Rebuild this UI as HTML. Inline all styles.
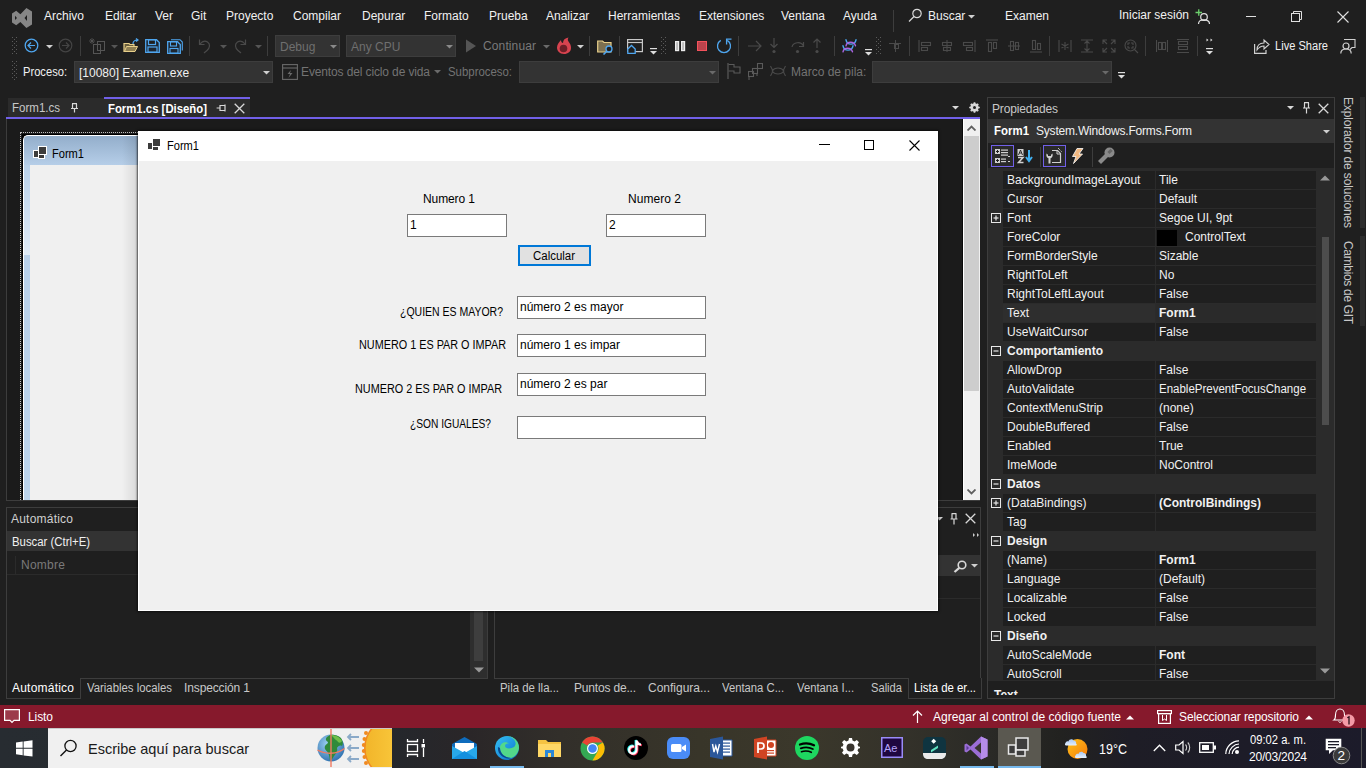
<!DOCTYPE html><html><head><meta charset="utf-8"><style>
*{margin:0;padding:0;box-sizing:border-box}
html,body{width:1366px;height:768px;overflow:hidden;background:#1f1f1f;font-family:"Liberation Sans",sans-serif}
.a{position:absolute}
.t{position:absolute;white-space:nowrap;line-height:normal}
</style></head><body>
<div class="t" style="left:44px;top:9px;font-size:12px;color:#f1f1f1;">Archivo</div>
<div class="t" style="left:105px;top:9px;font-size:12px;color:#f1f1f1;">Editar</div>
<div class="t" style="left:155px;top:9px;font-size:12px;color:#f1f1f1;">Ver</div>
<div class="t" style="left:191px;top:9px;font-size:12px;color:#f1f1f1;">Git</div>
<div class="t" style="left:226px;top:9px;font-size:12px;color:#f1f1f1;">Proyecto</div>
<div class="t" style="left:293px;top:9px;font-size:12px;color:#f1f1f1;">Compilar</div>
<div class="t" style="left:362px;top:9px;font-size:12px;color:#f1f1f1;">Depurar</div>
<div class="t" style="left:424px;top:9px;font-size:12px;color:#f1f1f1;">Formato</div>
<div class="t" style="left:489px;top:9px;font-size:12px;color:#f1f1f1;">Prueba</div>
<div class="t" style="left:546px;top:9px;font-size:12px;color:#f1f1f1;">Analizar</div>
<div class="t" style="left:608px;top:9px;font-size:12px;color:#f1f1f1;">Herramientas</div>
<div class="t" style="left:699px;top:9px;font-size:12px;color:#f1f1f1;">Extensiones</div>
<div class="t" style="left:781px;top:9px;font-size:12px;color:#f1f1f1;">Ventana</div>
<div class="t" style="left:843px;top:9px;font-size:12px;color:#f1f1f1;">Ayuda</div>
<div class="a" style="left:893px;top:10px;width:1px;height:22px;background:#3d3d3d;"></div>
<svg class="a" style="left:10px;top:6px;" width="24" height="24" viewBox="0 0 24 24"><path d="M2 7.5L6.2 4.8L10.4 8.2L16.4 2L22 5.5V18.5L16.4 22.1L10.4 16L6.2 19.2L2 16.5ZM5 9.8L7 12L5 14ZM17 9L14.5 12L17 15Z" fill="#868686" fill-rule="evenodd"/></svg>
<svg class="a" style="left:907px;top:7px;" width="15" height="16" viewBox="0 0 15 16"><circle cx="10" cy="6.5" r="4.2" fill="#2a2a2a" stroke="#d8d8d8" stroke-width="1.2"/><path d="M7 9.5L2 14.5" stroke="#d8d8d8" stroke-width="1.3"/></svg>
<svg class="a" style="left:968px;top:15px;" width="7" height="4" viewBox="0 0 7 4"><path d="M0 0H7L3.5 3.5Z" fill="#d0d0d0"/></svg>
<svg class="a" style="left:1194px;top:8px;" width="16" height="16" viewBox="0 0 16 16"><path d="M1.5 4.5H8M4.75 1.2V7.8" stroke="#6ccf6c" stroke-width="1.3"/><circle cx="10" cy="9" r="3.3" fill="none" stroke="#e0e0e0" stroke-width="1.2"/><path d="M4.5 16C4.5 12.5 7 11.8 10 11.8C13 11.8 15.5 12.5 15.5 16" fill="none" stroke="#e0e0e0" stroke-width="1.2"/></svg>
<div class="a" style="left:1246px;top:16px;width:10px;height:1px;background:#e0e0e0;"></div>
<svg class="a" style="left:1291px;top:11px;" width="12" height="12" viewBox="0 0 12 12"><rect x="0.5" y="2.5" width="8" height="8" fill="none" stroke="#e0e0e0"/><path d="M2.5 2.5V0.5H10.5V8.5H8.5" fill="none" stroke="#e0e0e0"/></svg>
<svg class="a" style="left:1337px;top:11px;" width="12" height="12" viewBox="0 0 12 12"><path d="M0.5 0.5L11.5 11.5M11.5 0.5L0.5 11.5" stroke="#e0e0e0" stroke-width="1.1"/></svg>
<div class="t" style="left:928px;top:9px;font-size:12px;color:#f1f1f1;">Buscar</div>
<div class="t" style="left:1005px;top:9px;font-size:12px;color:#f1f1f1;">Examen</div>
<div class="t" style="left:1119px;top:8px;font-size:12px;color:#f1f1f1;">Iniciar sesión</div>
<svg class="a" style="left:12px;top:37px;" width="5" height="18" viewBox="0 0 5 18"><g fill="#5a5a5a"><rect x="0" y="0" width="1" height="1"/><rect x="4" y="0" width="1" height="1"/><rect x="2" y="2" width="1" height="1"/><rect x="0" y="4" width="1" height="1"/><rect x="4" y="4" width="1" height="1"/><rect x="2" y="6" width="1" height="1"/><rect x="0" y="8" width="1" height="1"/><rect x="4" y="8" width="1" height="1"/><rect x="2" y="10" width="1" height="1"/><rect x="0" y="12" width="1" height="1"/><rect x="4" y="12" width="1" height="1"/><rect x="2" y="14" width="1" height="1"/><rect x="0" y="16" width="1" height="1"/><rect x="4" y="16" width="1" height="1"/></g></svg>
<svg class="a" style="left:24px;top:38px;" width="15" height="15" viewBox="0 0 15 15"><circle cx="7.5" cy="7.5" r="6.3" fill="none" stroke="#4fa6ef" stroke-width="1.3"/><path d="M11 7.5H4.2M7 4.5L4 7.5L7 10.5" fill="none" stroke="#4fa6ef" stroke-width="1.2"/></svg>
<svg class="a" style="left:46px;top:45px;" width="7" height="4" viewBox="0 0 7 4"><path d="M0 0H7L3.5 3.5Z" fill="#d0d0d0"/></svg>
<svg class="a" style="left:58px;top:38px;" width="15" height="15" viewBox="0 0 15 15"><circle cx="7.5" cy="7.5" r="6.3" fill="none" stroke="#444" stroke-width="1.2"/><path d="M4 7.5H10.8M8 4.5L11 7.5L8 10.5" fill="none" stroke="#444" stroke-width="1.2"/></svg>
<div class="a" style="left:80px;top:36px;width:1px;height:20px;background:#3d3d3d;"></div>
<svg class="a" style="left:89px;top:38px;" width="17" height="17" viewBox="0 0 17 17"><g fill="none" stroke="#555" stroke-width="1"><rect x="4.5" y="6.5" width="7" height="9"/><rect x="8.5" y="3.5" width="7" height="9"/></g><path d="M3 0V6M0 3H6M1 1L5 5M5 1L1 5" stroke="#555" stroke-width=".8"/></svg>
<svg class="a" style="left:111px;top:45px;" width="7" height="4" viewBox="0 0 7 4"><path d="M0 0H7L3.5 3.5Z" fill="#555"/></svg>
<svg class="a" style="left:123px;top:38px;" width="16" height="16" viewBox="0 0 16 16"><path d="M1 5.5H6L7 6.5H11V13.5H1Z" fill="#6b5f3d" stroke="#e8cf8a" stroke-width="1.2"/><path d="M1.5 13.5L3.5 8.5H14.5L12 13.5Z" fill="#8f7f52" stroke="#e8cf8a" stroke-width="1"/><path d="M10 6C10 3 12 2 14.5 2M13 0.5L15 2L13 3.5" fill="none" stroke="#4fa6ef" stroke-width="1.2"/></svg>
<svg class="a" style="left:145px;top:39px;" width="16" height="15" viewBox="0 0 16 15"><path d="M0.7 0.7H11.5L14.3 3.5V13.3H0.7Z" fill="#1e2630" stroke="#4fa6ef" stroke-width="1.3"/><rect x="3.5" y="1" width="7" height="4.5" fill="#1f1f1f" stroke="#4fa6ef" stroke-width="1.2"/><rect x="3" y="8" width="9" height="5" fill="#1e2630" stroke="#4fa6ef" stroke-width="1.2"/></svg>
<svg class="a" style="left:167px;top:39px;" width="16" height="15" viewBox="0 0 16 15"><path d="M4 0.7H13L15.3 3V11.5" fill="none" stroke="#4fa6ef" stroke-width="1.1"/><path d="M0.7 2.7H10.5L13.3 5.5V14.3H0.7Z" fill="#1e2630" stroke="#4fa6ef" stroke-width="1.3"/><rect x="3.5" y="3" width="6" height="4" fill="#1f1f1f" stroke="#4fa6ef" stroke-width="1.1"/><rect x="3" y="9.5" width="8" height="4.5" fill="#1e2630" stroke="#4fa6ef" stroke-width="1.1"/></svg>
<div class="a" style="left:189px;top:36px;width:1px;height:20px;background:#3d3d3d;"></div>
<svg class="a" style="left:198px;top:38px;" width="14" height="16" viewBox="0 0 14 16"><path d="M1.5 1.5V6.5H6.5M2 6C4 3.5 7 2.5 9.5 4C12.5 6 12 10 9 12.5L6 15" fill="none" stroke="#4a4a4a" stroke-width="1.2"/></svg>
<svg class="a" style="left:220px;top:45px;" width="7" height="4" viewBox="0 0 7 4"><path d="M0 0H7L3.5 3.5Z" fill="#555"/></svg>
<svg class="a" style="left:233px;top:38px;" width="14" height="16" viewBox="0 0 14 16"><path d="M12.5 1.5V6.5H7.5M12 6C10 3.5 7 2.5 4.5 4C1.5 6 2 10 5 12.5L8 15" fill="none" stroke="#4a4a4a" stroke-width="1.2"/></svg>
<svg class="a" style="left:255px;top:45px;" width="7" height="4" viewBox="0 0 7 4"><path d="M0 0H7L3.5 3.5Z" fill="#555"/></svg>
<div class="a" style="left:267px;top:36px;width:1px;height:20px;background:#3d3d3d;"></div>
<div class="a" style="left:275px;top:35px;width:65px;height:22px;background:#333333;border:1px solid #3d3d3d;"></div>
<div class="t" style="left:280px;top:40px;font-size:12px;color:#6f6f6f;">Debug</div>
<svg class="a" style="left:330px;top:45px;" width="7" height="4" viewBox="0 0 7 4"><path d="M0 0H7L3.5 3.5Z" fill="#8a8a8a"/></svg>
<div class="a" style="left:346px;top:35px;width:110px;height:22px;background:#333333;border:1px solid #3d3d3d;"></div>
<div class="t" style="left:351px;top:40px;font-size:12px;color:#6f6f6f;">Any CPU</div>
<svg class="a" style="left:446px;top:45px;" width="7" height="4" viewBox="0 0 7 4"><path d="M0 0H7L3.5 3.5Z" fill="#8a8a8a"/></svg>
<svg class="a" style="left:465px;top:39px;" width="12" height="14" viewBox="0 0 12 14"><path d="M1 0.5L11 7L1 13.5Z" fill="#555"/></svg>
<div class="t" style="left:483px;top:39px;font-size:12px;color:#7a7a7a;letter-spacing:0.121px;">Continuar</div>
<svg class="a" style="left:543px;top:45px;" width="7" height="4" viewBox="0 0 7 4"><path d="M0 0H7L3.5 3.5Z" fill="#6a6a6a"/></svg>
<svg class="a" style="left:556px;top:37px;" width="16" height="18" viewBox="0 0 16 18"><path d="M8 17C3.5 17 1 14 1 10.5C1 7 3.5 5 5 3C5 5 6 6 7 6C7 3 9 1 12.5 0.5C11 2.5 12 4 13.5 6C15 8 15 10 15 11C15 14.5 12 17 8 17Z" fill="#d8434f"/><circle cx="7.5" cy="11.5" r="3.8" fill="#6e1f27"/></svg>
<svg class="a" style="left:577px;top:45px;" width="7" height="4" viewBox="0 0 7 4"><path d="M0 0H7L3.5 3.5Z" fill="#d0d0d0"/></svg>
<div class="a" style="left:589px;top:36px;width:1px;height:20px;background:#3d3d3d;"></div>
<svg class="a" style="left:597px;top:40px;" width="17" height="15" viewBox="0 0 17 15"><path d="M0.7 1H5.5L7 2.5H14V12H0.7Z" fill="#7d7050" stroke="#e8cf8a" stroke-width="1.2"/><circle cx="12" cy="9" r="3" fill="#1f1f1f" stroke="#4fa6ef" stroke-width="1.3"/><path d="M9.8 11.2L6.5 14.5" stroke="#4fa6ef" stroke-width="1.6"/></svg>
<div class="a" style="left:619px;top:36px;width:1px;height:20px;background:#3d3d3d;"></div>
<svg class="a" style="left:627px;top:39px;" width="16" height="15" viewBox="0 0 16 15"><rect x="0.6" y="0.6" width="14.8" height="12" fill="#1f1f1f" stroke="#c8c8c8" stroke-width="1.2"/><path d="M1 3.5H15" stroke="#c8c8c8" stroke-width="1.2"/><path d="M0.8 10L4.5 6.5L8.2 10V14.3H0.8Z" fill="#1f1f1f" stroke="#4fa6ef" stroke-width="1.3"/></svg>
<svg class="a" style="left:650px;top:48px;" width="7" height="8" viewBox="0 0 7 8"><rect x="0" y="0" width="7" height="1.2" fill="#ddd"/><path d="M0 3H7L3.5 6.5Z" fill="#ddd"/></svg>
<svg class="a" style="left:661px;top:37px;" width="5" height="18" viewBox="0 0 5 18"><g fill="#5a5a5a"><rect x="0" y="0" width="1" height="1"/><rect x="4" y="0" width="1" height="1"/><rect x="2" y="2" width="1" height="1"/><rect x="0" y="4" width="1" height="1"/><rect x="4" y="4" width="1" height="1"/><rect x="2" y="6" width="1" height="1"/><rect x="0" y="8" width="1" height="1"/><rect x="4" y="8" width="1" height="1"/><rect x="2" y="10" width="1" height="1"/><rect x="0" y="12" width="1" height="1"/><rect x="4" y="12" width="1" height="1"/><rect x="2" y="14" width="1" height="1"/><rect x="0" y="16" width="1" height="1"/><rect x="4" y="16" width="1" height="1"/></g></svg>
<svg class="a" style="left:674px;top:40px;" width="12" height="12" viewBox="0 0 12 12"><rect x="1.6" y="1.6" width="3" height="9" fill="#b8b8b8" stroke="#ececec" stroke-width="1.2"/><rect x="7.6" y="1.6" width="3" height="9" fill="#b8b8b8" stroke="#ececec" stroke-width="1.2"/></svg>
<div class="a" style="left:697px;top:41px;width:10px;height:10px;background:#bb434c;border:1px solid #f4525c;"></div>
<svg class="a" style="left:716px;top:38px;" width="16" height="16" viewBox="0 0 16 16"><path d="M4.75 2.4A6.5 6.5 0 1 0 11.25 2.4" fill="none" stroke="#4fa6ef" stroke-width="1.3"/><path d="M10.6 6.5V1.2H15.5" fill="none" stroke="#4fa6ef" stroke-width="1.3"/></svg>
<div class="a" style="left:738px;top:36px;width:1px;height:20px;background:#3d3d3d;"></div>
<svg class="a" style="left:747px;top:39px;" width="16" height="14" viewBox="0 0 16 14"><path d="M1 7H14M9 2L14 7L9 12" fill="none" stroke="#4a4a4a" stroke-width="1.2"/></svg>
<svg class="a" style="left:769px;top:38px;" width="10" height="16" viewBox="0 0 10 16"><path d="M5 0V9M1.5 6L5 9.5L8.5 6" fill="none" stroke="#4a4a4a" stroke-width="1.2"/><circle cx="5" cy="13.5" r="1.6" fill="#4a4a4a"/></svg>
<svg class="a" style="left:790px;top:38px;" width="16" height="16" viewBox="0 0 16 16"><path d="M2 9C3 4 11 3 13.5 8M13.5 4V8.5H9" fill="none" stroke="#4a4a4a" stroke-width="1.2"/><circle cx="7.5" cy="13.5" r="1.6" fill="#4a4a4a"/></svg>
<svg class="a" style="left:812px;top:38px;" width="10" height="16" viewBox="0 0 10 16"><path d="M5 10V1M1.5 4.5L5 1L8.5 4.5" fill="none" stroke="#4a4a4a" stroke-width="1.2"/><circle cx="5" cy="13.5" r="1.6" fill="#4a4a4a"/></svg>
<div class="a" style="left:834px;top:36px;width:1px;height:20px;background:#3d3d3d;"></div>
<svg class="a" style="left:842px;top:38px;" width="16" height="16" viewBox="0 0 16 16"><g fill="none" stroke-width="1.4" stroke-linecap="round"><path d="M4 1.8C5 7.5 13 7.5 14 1.8" stroke="#4aa8f0"/><path d="M4 7.8C5 3 12 3 13.5 7.8" stroke="#a864e0"/><path d="M1 7.8C2 13.5 10 13.5 11 7.8" stroke="#4aa8f0"/><path d="M1 13.8C2 9 9 9 10.5 13.8" stroke="#a864e0"/></g></svg>
<svg class="a" style="left:865px;top:49px;" width="7" height="8" viewBox="0 0 7 8"><rect x="0" y="0" width="7" height="1.2" fill="#ddd"/><path d="M0 3H7L3.5 6.5Z" fill="#ddd"/></svg>
<svg class="a" style="left:876px;top:37px;" width="5" height="18" viewBox="0 0 5 18"><g fill="#5a5a5a"><rect x="0" y="0" width="1" height="1"/><rect x="4" y="0" width="1" height="1"/><rect x="2" y="2" width="1" height="1"/><rect x="0" y="4" width="1" height="1"/><rect x="4" y="4" width="1" height="1"/><rect x="2" y="6" width="1" height="1"/><rect x="0" y="8" width="1" height="1"/><rect x="4" y="8" width="1" height="1"/><rect x="2" y="10" width="1" height="1"/><rect x="0" y="12" width="1" height="1"/><rect x="4" y="12" width="1" height="1"/><rect x="2" y="14" width="1" height="1"/><rect x="0" y="16" width="1" height="1"/><rect x="4" y="16" width="1" height="1"/></g></svg>
<svg class="a" style="left:888px;top:39px;" width="14" height="14" viewBox="0 0 14 14"><g fill="none" stroke="#4a4a4a" stroke-width="1"><path d="M7.5 1V13M1 4.5H13"/><rect x="6.5" y="5.5" width="4" height="4"/></g></svg>
<div class="a" style="left:909px;top:36px;width:1px;height:20px;background:#3d3d3d;"></div>
<svg class="a" style="left:918px;top:39px;" width="14" height="14" viewBox="0 0 14 14"><g fill="none" stroke="#4a4a4a" stroke-width="1.1"><path d="M1 1V13"/><rect x="3.5" y="3.5" width="9" height="3"/><rect x="3.5" y="8.5" width="6" height="3"/></g></svg>
<svg class="a" style="left:940px;top:39px;" width="14" height="14" viewBox="0 0 14 14"><g fill="none" stroke="#4a4a4a" stroke-width="1.1"><path d="M7 1V13"/><rect x="2.5" y="3.5" width="9" height="3"/><rect x="3.5" y="8.5" width="7" height="3"/></g></svg>
<svg class="a" style="left:962px;top:39px;" width="14" height="14" viewBox="0 0 14 14"><g fill="none" stroke="#4a4a4a" stroke-width="1.1"><path d="M13 1V13"/><rect x="1.5" y="3.5" width="9" height="3"/><rect x="4.5" y="8.5" width="6" height="3"/></g></svg>
<svg class="a" style="left:985px;top:39px;" width="14" height="14" viewBox="0 0 14 14"><g fill="none" stroke="#4a4a4a" stroke-width="1.1"><path d="M1 1H13"/><rect x="3.5" y="3.5" width="3" height="9"/><rect x="8.5" y="3.5" width="3" height="6"/></g></svg>
<svg class="a" style="left:1007px;top:39px;" width="14" height="14" viewBox="0 0 14 14"><g fill="none" stroke="#4a4a4a" stroke-width="1.1"><path d="M1 7H13"/><rect x="3.5" y="2.5" width="3" height="9"/><rect x="8.5" y="3.5" width="3" height="7"/></g></svg>
<svg class="a" style="left:1029px;top:39px;" width="14" height="14" viewBox="0 0 14 14"><g fill="none" stroke="#4a4a4a" stroke-width="1.1"><path d="M1 13H13"/><rect x="3.5" y="1.5" width="3" height="9"/><rect x="8.5" y="4.5" width="3" height="6"/></g></svg>
<div class="a" style="left:1049px;top:36px;width:1px;height:20px;background:#3d3d3d;"></div>
<svg class="a" style="left:1058px;top:39px;" width="14" height="14" viewBox="0 0 14 14"><g fill="none" stroke="#4a4a4a" stroke-width="1.1"><path d="M1 1V13M13 1V13M7 3V11M3.5 5L10.5 9M10.5 5L3.5 9"/></g></svg>
<svg class="a" style="left:1080px;top:39px;" width="14" height="14" viewBox="0 0 14 14"><g fill="none" stroke="#4a4a4a" stroke-width="1.1"><path d="M1 1H13M1 13H13M7 2V12M4.5 4.5L7 2L9.5 4.5M4.5 9.5L7 12L9.5 9.5"/></g></svg>
<svg class="a" style="left:1102px;top:39px;" width="14" height="14" viewBox="0 0 14 14"><g fill="none" stroke="#4a4a4a" stroke-width="1.1"><path d="M1 5V1H5M9 1H13V5M13 9V13H9M5 13H1V9M1 1L5 5M13 1L9 5M13 13L9 9M1 13L5 9"/></g></svg>
<svg class="a" style="left:1124px;top:39px;" width="15" height="15" viewBox="0 0 15 15"><g fill="none" stroke="#4a4a4a" stroke-width="1.1"><circle cx="6.5" cy="6.5" r="5.5"/><path d="M10.5 10.5L14 14M4 6V4H6M7 4H9V6M9 7V9H7M6 9H4V7"/></g></svg>
<div class="a" style="left:1145px;top:36px;width:1px;height:20px;background:#3d3d3d;"></div>
<svg class="a" style="left:1156px;top:39px;" width="12" height="14" viewBox="0 0 12 14"><g fill="none" stroke="#4a4a4a" stroke-width="1.1"><path d="M0.5 1V13M11.5 1V13"/><rect x="2.5" y="3.5" width="3" height="7"/><rect x="6.5" y="3.5" width="3" height="7"/></g></svg>
<svg class="a" style="left:1176px;top:39px;" width="14" height="14" viewBox="0 0 14 14"><g fill="none" stroke="#4a4a4a" stroke-width="1.1"><path d="M1 0.5H13M1 13.5H13"/><rect x="2.5" y="2.5" width="9" height="3"/><rect x="2.5" y="7.5" width="9" height="3"/></g></svg>
<div class="a" style="left:1197px;top:36px;width:1px;height:20px;background:#3d3d3d;"></div>
<svg class="a" style="left:1206px;top:38px;" width="8" height="18" viewBox="0 0 8 18"><path d="M0.5 0.5L2.5 2L0.5 3.5ZM4.5 0.5L6.5 2L4.5 3.5Z" fill="#ddd"/><rect x="0" y="10" width="7" height="1.2" fill="#ddd"/><path d="M0 13H7L3.5 16.5Z" fill="#ddd"/></svg>
<svg class="a" style="left:1254px;top:38px;" width="16" height="16" viewBox="0 0 16 16"><path d="M0.6 6V15.4H12V12" fill="none" stroke="#d0d0d0" stroke-width="1.2"/><path d="M3 12C3 7 6 5 10 5V2L15 6.5L10 11V8C7 8 5 9 3 12Z" fill="none" stroke="#d0d0d0" stroke-width="1.1"/></svg>
<div class="t" style="left:1275px;top:39px;font-size:12px;color:#f1f1f1;transform-origin:0 0;transform:scaleX(0.9240);">Live Share</div>
<svg class="a" style="left:1340px;top:38px;" width="16" height="16" viewBox="0 0 16 16"><path d="M4 1.5H15V9.5H12L10 11.5" fill="none" stroke="#d0d0d0" stroke-width="1.1"/><circle cx="6" cy="8" r="3" fill="none" stroke="#d0d0d0" stroke-width="1.2"/><path d="M0.8 15.5C0.8 12 3 11 6 11C9 11 11.2 12 11.2 15.5" fill="none" stroke="#d0d0d0" stroke-width="1.2"/></svg>
<svg class="a" style="left:12px;top:61px;" width="5" height="20" viewBox="0 0 5 20"><g fill="#5a5a5a"><rect x="0" y="0" width="1" height="1"/><rect x="4" y="0" width="1" height="1"/><rect x="2" y="2" width="1" height="1"/><rect x="0" y="4" width="1" height="1"/><rect x="4" y="4" width="1" height="1"/><rect x="2" y="6" width="1" height="1"/><rect x="0" y="8" width="1" height="1"/><rect x="4" y="8" width="1" height="1"/><rect x="2" y="10" width="1" height="1"/><rect x="0" y="12" width="1" height="1"/><rect x="4" y="12" width="1" height="1"/><rect x="2" y="14" width="1" height="1"/><rect x="0" y="16" width="1" height="1"/><rect x="4" y="16" width="1" height="1"/><rect x="2" y="18" width="1" height="1"/></g></svg>
<div class="t" style="left:23px;top:65px;font-size:12px;color:#f1f1f1;transform-origin:0 0;transform:scaleX(0.9294);">Proceso:</div>
<div class="a" style="left:74px;top:61px;width:199px;height:22px;background:#333333;border:1px solid #3d3d3d;"></div>
<div class="t" style="left:79px;top:66px;font-size:12px;color:#f1f1f1;">[10080] Examen.exe</div>
<svg class="a" style="left:263px;top:71px;" width="7" height="4" viewBox="0 0 7 4"><path d="M0 0H7L3.5 3.5Z" fill="#d0d0d0"/></svg>
<svg class="a" style="left:282px;top:64px;" width="16" height="16" viewBox="0 0 16 16"><rect x="0.6" y="0.6" width="14.8" height="14.8" fill="none" stroke="#6a6a6a" stroke-width="1.1"/><path d="M1 4H15" stroke="#6a6a6a" stroke-width="1.1"/><path d="M9 6L5.5 10H8L6.5 14L10.5 9H8Z" fill="#6a6a6a"/></svg>
<div class="t" style="left:301px;top:65px;font-size:12px;color:#737373;letter-spacing:-0.127px;">Eventos del ciclo de vida</div>
<svg class="a" style="left:434px;top:70px;" width="7" height="4" viewBox="0 0 7 4"><path d="M0 0H7L3.5 3.5Z" fill="#6a6a6a"/></svg>
<div class="t" style="left:448px;top:65px;font-size:12px;color:#737373;transform-origin:0 0;transform:scaleX(0.9501);">Subproceso:</div>
<div class="a" style="left:519px;top:61px;width:200px;height:22px;background:#333333;border:1px solid #3d3d3d;"></div>
<svg class="a" style="left:709px;top:71px;" width="7" height="4" viewBox="0 0 7 4"><path d="M0 0H7L3.5 3.5Z" fill="#6a6a6a"/></svg>
<svg class="a" style="left:727px;top:63px;" width="14" height="16" viewBox="0 0 14 16"><path d="M1 0V16" stroke="#5a5a5a" stroke-width="1.2"/><path d="M1.5 1.5H7V4H13V10H7V8H1.5" fill="none" stroke="#5a5a5a" stroke-width="1.1"/></svg>
<svg class="a" style="left:748px;top:63px;" width="15" height="17" viewBox="0 0 15 17"><g fill="none" stroke="#5a5a5a" stroke-width="1.1"><rect x="0.5" y="8.5" width="5" height="5"/><rect x="4.5" y="5.5" width="5" height="5"/><rect x="9.5" y="0.5" width="5" height="5"/><path d="M1 14V17M9 10.5V13"/></g></svg>
<svg class="a" style="left:770px;top:65px;" width="16" height="12" viewBox="0 0 16 12"><g fill="none" stroke="#4a4a4a" stroke-width="1.1"><path d="M0.5 1L3 6L0.5 11M15.5 1L13 6L15.5 11M2 6C5 2 11 2 14 6C11 10 5 10 2 6"/></g></svg>
<div class="t" style="left:791px;top:65px;font-size:12px;color:#737373;">Marco de pila:</div>
<div class="a" style="left:872px;top:61px;width:240px;height:22px;background:#333333;border:1px solid #3d3d3d;"></div>
<svg class="a" style="left:1102px;top:71px;" width="7" height="4" viewBox="0 0 7 4"><path d="M0 0H7L3.5 3.5Z" fill="#6a6a6a"/></svg>
<svg class="a" style="left:1118px;top:72px;" width="7" height="8" viewBox="0 0 7 8"><rect x="0" y="0" width="7" height="1.2" fill="#ddd"/><path d="M0 3H7L3.5 6.5Z" fill="#ddd"/></svg>
<div class="a" style="left:8px;top:98px;width:96px;height:19px;background:#2b2b2b;"></div>
<div class="t" style="left:12px;top:101px;font-size:12px;color:#c8c8c8;transform-origin:0 0;transform:scaleX(0.9600);">Form1.cs</div>
<svg class="a" style="left:70px;top:103px;" width="9" height="10" viewBox="0 0 9 10"><path d="M2 0.6H7M2.5 1V5.5H6.5V1M1 5.5H8M4.5 6V9.5" fill="none" stroke="#d8d8d8" stroke-width="1.2"/></svg>
<div class="a" style="left:104px;top:97px;width:146px;height:20px;background:#2b2b2b;"></div>
<div class="a" style="left:104px;top:97px;width:146px;height:2px;background:#7160e8;"></div>
<div class="t" style="left:108px;top:102px;font-size:12px;color:#ffffff;font-weight:bold;transform-origin:0 0;transform:scaleX(0.9458);">Form1.cs [Diseño]</div>
<svg class="a" style="left:216px;top:103px;" width="11" height="10" viewBox="0 0 11 10"><path d="M0.6 5H4M4 2V8M4.5 2.5H9V7.5H4.5M9 1.5V8.5" fill="none" stroke="#d8d8d8" stroke-width="1.2"/></svg>
<svg class="a" style="left:234px;top:103px;" width="11" height="11" viewBox="0 0 11 11"><path d="M0.7 0.7L10.3 10.3M10.3 0.7L0.7 10.3" stroke="#d8d8d8" stroke-width="1.3"/></svg>
<svg class="a" style="left:952px;top:106px;" width="7" height="4" viewBox="0 0 7 4"><path d="M0 0H7L3.5 3.5Z" fill="#d8d8d8"/></svg>
<svg class="a" style="left:969px;top:102px;" width="11" height="11" viewBox="0 0 11 11"><circle cx="5.5" cy="5.5" r="3.2" fill="none" stroke="#d8d8d8" stroke-width="2"/><path d="M5.5 0.2V10.8M0.2 5.5H10.8M1.8 1.8L9.2 9.2M9.2 1.8L1.8 9.2" stroke="#d8d8d8" stroke-width="1.7"/><circle cx="5.5" cy="5.5" r="1.5" fill="#1f1f1f"/></svg>
<div class="a" style="left:6px;top:117px;width:974px;height:2px;background:#7160e8;"></div>
<div class="a" style="left:6px;top:119px;width:974px;height:382px;background:#1b1b1b;border-left:1px solid #3d3d3d;border-bottom:1px solid #3d3d3d;"></div>
<div class="a" style="left:20px;top:132px;width:118px;height:368px;border-left:1px dotted #c0c0c0;border-top:1px dotted #c0c0c0;"></div>
<div class="a" style="left:22px;top:134px;width:116px;height:366px;background:#000;"></div>
<div class="a" style="left:23px;top:135px;width:115px;height:365px;background:linear-gradient(#93aecb,#b7cfe9 30px,#bcd4ec);border-top-left-radius:5px;border-left:1px solid #fff;border-top:1px solid #fff;"></div>
<div class="a" style="left:30px;top:165px;width:108px;height:335px;background:#f0f0f0;"></div>
<div class="a" style="left:24px;top:165px;width:6px;height:90px;background:linear-gradient(#b9d1ea,#dfeaf6);"></div>
<div class="a" style="left:122px;top:136px;width:16px;height:364px;background:linear-gradient(90deg,rgba(0,0,0,0),rgba(0,0,0,.09) 90%,rgba(0,0,0,.35));"></div>
<svg class="a" style="left:33px;top:146px;" width="14" height="13" viewBox="0 0 14 13"><g fill="#3c3c3c" stroke="#fff" stroke-width="1"><rect x="5.5" y="0.5" width="8" height="8"/><rect x="0.5" y="4.5" width="5" height="7"/><rect x="5.5" y="8.5" width="6" height="4"/></g></svg>
<div class="t" style="left:52px;top:147px;font-size:12px;color:#000000;transform-origin:0 0;transform:scaleX(0.9229);">Form1</div>
<div class="a" style="left:962px;top:119px;width:1px;height:381px;background:#0a0a0a;"></div>
<div class="a" style="left:963px;top:119px;width:17px;height:381px;background:#f0f0f0;border-left:1px solid #fff;"></div>
<div class="a" style="left:964px;top:136px;width:15px;height:255px;background:#cdcdcd;"></div>
<svg class="a" style="left:967px;top:125px;" width="9" height="6" viewBox="0 0 9 6"><path d="M0.5 5.5L4.5 1.5L8.5 5.5" fill="none" stroke="#606060" stroke-width="1.8"/></svg>
<svg class="a" style="left:967px;top:489px;" width="9" height="6" viewBox="0 0 9 6"><path d="M0.5 0.5L4.5 4.5L8.5 0.5" fill="none" stroke="#606060" stroke-width="1.8"/></svg>
<div class="a" style="left:6px;top:507px;width:482px;height:172px;background:#1f1f1f;border:1px solid #3d3d3d;"></div>
<div class="t" style="left:11px;top:512px;font-size:12px;color:#d0d0d0;letter-spacing:0.220px;">Automático</div>
<div class="a" style="left:7px;top:531px;width:480px;height:20px;background:#333333;"></div>
<div class="t" style="left:12px;top:535px;font-size:12px;color:#f1f1f1;transform-origin:0 0;transform:scaleX(0.9471);">Buscar (Ctrl+E)</div>
<div class="a" style="left:7px;top:574px;width:480px;height:1px;background:#2b2b2b;"></div>
<div class="a" style="left:15px;top:556px;width:1px;height:18px;background:#2b2b2b;"></div>
<div class="t" style="left:21px;top:558px;font-size:12px;color:#7a7a7a;letter-spacing:0.263px;">Nombre</div>
<div class="a" style="left:470px;top:575px;width:17px;height:103px;background:#2e2e2e;"></div>
<div class="a" style="left:474px;top:580px;width:9px;height:81px;background:#3e3e3e;"></div>
<svg class="a" style="left:474px;top:667px;" width="10" height="6" viewBox="0 0 10 6"><path d="M0 0.5L5 5.5L10 0.5Z" fill="#999"/></svg>
<div class="a" style="left:494px;top:507px;width:487px;height:172px;background:#1f1f1f;border:1px solid #3d3d3d;"></div>
<svg class="a" style="left:936px;top:517px;" width="7" height="4" viewBox="0 0 7 4"><path d="M0 0H7L3.5 3.5Z" fill="#d0d0d0"/></svg>
<svg class="a" style="left:950px;top:513px;" width="8" height="12" viewBox="0 0 8 12"><path d="M1.5 0.6H6.5M2 1V6H6V1M0.5 6H7.5M4 6.5V11.5" fill="none" stroke="#d8d8d8" stroke-width="1.2"/></svg>
<svg class="a" style="left:965px;top:513px;" width="11" height="11" viewBox="0 0 11 11"><path d="M0.7 0.7L10.3 10.3M10.3 0.7L0.7 10.3" stroke="#d8d8d8" stroke-width="1.3"/></svg>
<svg class="a" style="left:973px;top:533px;" width="7" height="4" viewBox="0 0 7 4"><path d="M0 0L2 2L0 4ZM4 0L6 2L4 4Z" fill="#ccc"/></svg>
<div class="a" style="left:495px;top:555px;width:485px;height:21px;background:#333333;"></div>
<svg class="a" style="left:953px;top:560px;" width="14" height="13" viewBox="0 0 14 13"><circle cx="9" cy="5" r="3.8" fill="none" stroke="#d8d8d8" stroke-width="1.6"/><path d="M6.3 7.8L1.5 12" stroke="#d8d8d8" stroke-width="2.2"/></svg>
<svg class="a" style="left:971px;top:564px;" width="7" height="4" viewBox="0 0 7 4"><path d="M0 0H7L3.5 3.5Z" fill="#d0d0d0"/></svg>
<div class="a" style="left:495px;top:598px;width:485px;height:1px;background:#2b2b2b;"></div>
<div class="a" style="left:6px;top:678px;width:75px;height:21px;background:#1f1f1f;border:1px solid #3d3d3d;border-top:none;"></div>
<div class="t" style="left:12px;top:681px;font-size:12px;color:#ffffff;letter-spacing:0.220px;">Automático</div>
<div class="t" style="left:87px;top:681px;font-size:12px;color:#c8c8c8;transform-origin:0 0;transform:scaleX(0.9463);">Variables locales</div>
<div class="t" style="left:184px;top:681px;font-size:12px;color:#c8c8c8;letter-spacing:-0.124px;">Inspección 1</div>
<div class="t" style="left:500px;top:681px;font-size:12px;color:#c8c8c8;transform-origin:0 0;transform:scaleX(0.9514);">Pila de lla...</div>
<div class="t" style="left:574px;top:681px;font-size:12px;color:#c8c8c8;letter-spacing:-0.182px;">Puntos de...</div>
<div class="t" style="left:648px;top:681px;font-size:12px;color:#c8c8c8;letter-spacing:-0.001px;">Configura...</div>
<div class="t" style="left:722px;top:681px;font-size:12px;color:#c8c8c8;transform-origin:0 0;transform:scaleX(0.9392);">Ventana C...</div>
<div class="t" style="left:797px;top:681px;font-size:12px;color:#c8c8c8;transform-origin:0 0;transform:scaleX(0.9395);">Ventana I...</div>
<div class="t" style="left:871px;top:681px;font-size:12px;color:#c8c8c8;transform-origin:0 0;transform:scaleX(0.9293);">Salida</div>
<div class="a" style="left:908px;top:678px;width:74px;height:21px;background:#1f1f1f;border:1px solid #3d3d3d;border-top:none;"></div>
<div class="t" style="left:914px;top:681px;font-size:12px;color:#ffffff;transform-origin:0 0;transform:scaleX(0.9488);">Lista de er...</div>
<div class="a" style="left:138px;top:131px;width:800px;height:480px;background:#f0f0f0;border:1px solid #ffffff;box-shadow:0 0 2px 1px rgba(0,0,0,.55);"></div>
<div class="a" style="left:138px;top:131px;width:800px;height:30px;background:#ffffff;"></div>
<svg class="a" style="left:147px;top:138px;" width="14" height="13" viewBox="0 0 14 13"><g fill="#3c3c3c"><rect x="6" y="1" width="7" height="7"/><rect x="1" y="5" width="4" height="6"/><rect x="6" y="9" width="5" height="3"/></g></svg>
<div class="t" style="left:167px;top:139px;font-size:12px;color:#000000;transform-origin:0 0;transform:scaleX(0.9229);">Form1</div>
<div class="a" style="left:819px;top:144px;width:11px;height:1px;background:#000;"></div>
<div class="a" style="left:864px;top:140px;width:10px;height:10px;border:1px solid #000;"></div>
<svg class="a" style="left:909px;top:140px;" width="11" height="11" viewBox="0 0 11 11"><path d="M0.5 0.5L10.5 10.5M10.5 0.5L0.5 10.5" stroke="#000" stroke-width="1.1"/></svg>
<div class="t" style="left:423px;top:192px;font-size:12px;color:#000000;letter-spacing:-0.098px;">Numero 1</div>
<div class="t" style="left:628px;top:192px;font-size:12px;color:#000000;letter-spacing:0.045px;">Numero 2</div>
<div class="a" style="left:407px;top:214px;width:100px;height:23px;background:#ffffff;border:1px solid #7a7a7a;"></div>
<div class="t" style="left:410px;top:218px;font-size:12px;color:#000000;">1</div>
<div class="a" style="left:606px;top:214px;width:100px;height:23px;background:#ffffff;border:1px solid #7a7a7a;"></div>
<div class="t" style="left:609px;top:218px;font-size:12px;color:#000000;">2</div>
<div class="a" style="left:518px;top:245px;width:73px;height:21px;background:#e1e1e1;border:2px solid #0078d7;"></div>
<div class="t" style="left:533px;top:249px;font-size:12px;color:#000000;transform-origin:0 0;transform:scaleX(0.9539);">Calcular</div>
<div class="a" style="left:517px;top:296px;width:189px;height:23px;background:#ffffff;border:1px solid #7a7a7a;"></div>
<div class="t" style="left:520px;top:300px;font-size:12px;color:#000000;">número 2 es mayor</div>
<div class="a" style="left:517px;top:334px;width:189px;height:23px;background:#ffffff;border:1px solid #7a7a7a;"></div>
<div class="t" style="left:520px;top:338px;font-size:12px;color:#000000;">número 1 es impar</div>
<div class="a" style="left:517px;top:373px;width:189px;height:23px;background:#ffffff;border:1px solid #7a7a7a;"></div>
<div class="t" style="left:520px;top:377px;font-size:12px;color:#000000;">número 2 es par</div>
<div class="a" style="left:517px;top:416px;width:189px;height:23px;background:#ffffff;border:1px solid #7a7a7a;"></div>
<div class="t" style="left:400px;top:305px;font-size:12px;color:#000000;transform-origin:0 0;transform:scaleX(0.8746);">¿QUIEN ES MAYOR?</div>
<div class="t" style="left:359px;top:338px;font-size:12px;color:#000000;transform-origin:0 0;transform:scaleX(0.9025);">NUMERO 1 ES PAR O IMPAR</div>
<div class="t" style="left:355px;top:382px;font-size:12px;color:#000000;transform-origin:0 0;transform:scaleX(0.9025);">NUMERO 2 ES PAR O IMPAR</div>
<div class="t" style="left:410px;top:417px;font-size:12px;color:#000000;transform-origin:0 0;transform:scaleX(0.8497);">¿SON IGUALES?</div>
<div class="a" style="left:987px;top:97px;width:348px;height:602px;background:#1f1f1f;border:1px solid #3d3d3d;"></div>
<div class="t" style="left:992px;top:102px;font-size:12px;color:#c8c8c8;letter-spacing:-0.138px;">Propiedades</div>
<svg class="a" style="left:1287px;top:106px;" width="7" height="4" viewBox="0 0 7 4"><path d="M0 0H7L3.5 3.5Z" fill="#d8d8d8"/></svg>
<svg class="a" style="left:1302px;top:102px;" width="9" height="12" viewBox="0 0 9 12"><path d="M2 0.6H7M2.5 1V6H6.5V1M1 6H8M4.5 6.5V11.5" fill="none" stroke="#d8d8d8" stroke-width="1.2"/></svg>
<svg class="a" style="left:1318px;top:103px;" width="11" height="11" viewBox="0 0 11 11"><path d="M0.7 0.7L10.3 10.3M10.3 0.7L0.7 10.3" stroke="#d8d8d8" stroke-width="1.3"/></svg>
<div class="a" style="left:988px;top:119px;width:346px;height:24px;background:#333333;"></div>
<div class="t" style="left:994px;top:124px;font-size:12px;color:#ffffff;font-weight:bold;transform-origin:0 0;transform:scaleX(0.9544);">Form1</div>
<div class="t" style="left:1036px;top:124px;font-size:12px;color:#f1f1f1;letter-spacing:-0.195px;">System.Windows.Forms.Form</div>
<svg class="a" style="left:1323px;top:130px;" width="7" height="4" viewBox="0 0 7 4"><path d="M0 0H7L3.5 3.5Z" fill="#d0d0d0"/></svg>
<div class="a" style="left:991px;top:145px;width:23px;height:22px;background:#2a2a2a;border:1px solid #7160e8;"></div>
<svg class="a" style="left:995px;top:149px;" width="15" height="15" viewBox="0 0 15 15"><g fill="#d0d0d0"><rect x="0" y="0" width="5" height="5"/><rect x="0" y="9" width="5" height="5"/><rect x="6" y="0.5" width="7" height="1.2"/><rect x="6" y="3" width="7" height="1.2"/><rect x="6" y="5.5" width="7" height="1.2"/><rect x="6" y="9.5" width="5" height="1.2"/><rect x="6" y="12" width="5" height="1.2"/><rect x="13" y="7" width="2" height="1"/><rect x="13" y="12" width="2" height="1"/></g><g fill="#1f1f1f"><rect x="2" y="1" width="1" height="3"/><rect x="1" y="2" width="3" height="1"/><rect x="2" y="10" width="1" height="3"/><rect x="1" y="11" width="3" height="1"/></g></svg>
<svg class="a" style="left:1017px;top:149px;" width="16" height="15" viewBox="0 0 16 15"><rect x="0.5" y="0" width="6" height="7" fill="#d0d0d0"/><path d="M1.5 6L3.5 1L5.5 6M2.3 4H4.7" fill="none" stroke="#1f1f1f" stroke-width=".9"/><path d="M1 8.5H6L1.5 13.5H6.5" fill="none" stroke="#d0d0d0" stroke-width="1.6"/><path d="M12 1V11M9 8L12 12L15 8" fill="none" stroke="#3fb0f0" stroke-width="2"/></svg>
<div class="a" style="left:1040px;top:147px;width:1px;height:20px;background:#3d3d3d;"></div>
<div class="a" style="left:1043px;top:145px;width:23px;height:22px;background:#2a2a2a;border:1px solid #7160e8;"></div>
<svg class="a" style="left:1045px;top:147px;" width="18" height="18" viewBox="0 0 18 18"><path d="M7 3.5H12.5L15.5 6.5V15.5H7" fill="none" stroke="#d0d0d0" stroke-width="1.2"/><path d="M12 3.5V7H15.5" fill="none" stroke="#d0d0d0" stroke-width="1"/><path d="M13 1L16.5 4.5" stroke="#fff" stroke-width="1" stroke-dasharray="1 1"/><path d="M1.5 6.5C0.8 9 2 11 3.5 11.2V16.5H5.5V11.2C7 11 8.2 9 7.5 6.5L6 7.8V9H3V7.8Z" fill="#d0d0d0"/></svg>
<svg class="a" style="left:1070px;top:148px;" width="14" height="16" viewBox="0 0 14 16"><path d="M7 0.5H13L9 6H12.5L3.5 15.5L6 8.5H2.5Z" fill="#f2b880" stroke="#fff" stroke-width=".8"/></svg>
<div class="a" style="left:1092px;top:147px;width:1px;height:20px;background:#3d3d3d;"></div>
<svg class="a" style="left:1097px;top:147px;" width="18" height="18" viewBox="0 0 18 18"><circle cx="12.5" cy="5.5" r="5" fill="#8a8a8a"/><path d="M8.5 6.5L1 14L4 17L11.5 9.5Z" fill="#8a8a8a"/><rect x="11.5" y="2.2" width="3" height="4.5" fill="#666" transform="rotate(45 13 4.5)"/></svg>
<div class="a" style="left:988px;top:168px;width:346px;height:512px;background:#2b2b2b;"></div>
<div class="a" style="left:1003px;top:171px;width:152px;height:18px;background:#1f1f1f;"></div>
<div class="a" style="left:1156px;top:171px;width:160px;height:18px;background:#1f1f1f;"></div>
<div class="t" style="left:1007px;top:173px;font-size:12px;color:#f1f1f1;">BackgroundImageLayout</div>
<div class="t" style="left:1159px;top:173px;font-size:12px;color:#f1f1f1;">Tile</div>
<div class="a" style="left:1003px;top:190px;width:152px;height:18px;background:#1f1f1f;"></div>
<div class="a" style="left:1156px;top:190px;width:160px;height:18px;background:#1f1f1f;"></div>
<div class="t" style="left:1007px;top:192px;font-size:12px;color:#f1f1f1;">Cursor</div>
<div class="t" style="left:1159px;top:192px;font-size:12px;color:#f1f1f1;">Default</div>
<div class="a" style="left:1003px;top:209px;width:152px;height:18px;background:#1f1f1f;"></div>
<div class="a" style="left:1156px;top:209px;width:160px;height:18px;background:#1f1f1f;"></div>
<svg class="a" style="left:991px;top:213px;" width="10" height="10" viewBox="0 0 10 10"><rect x="0.5" y="0.5" width="9" height="9" fill="none" stroke="#e8e8e8"/><path d="M2.5 5H7.5" stroke="#e8e8e8" stroke-width="1.2"/><path d="M5 2.5V7.5" stroke="#e8e8e8" stroke-width="1.2"/></svg>
<div class="t" style="left:1007px;top:211px;font-size:12px;color:#f1f1f1;">Font</div>
<div class="t" style="left:1159px;top:211px;font-size:12px;color:#f1f1f1;">Segoe UI, 9pt</div>
<div class="a" style="left:1003px;top:228px;width:152px;height:18px;background:#1f1f1f;"></div>
<div class="a" style="left:1156px;top:228px;width:160px;height:18px;background:#1f1f1f;"></div>
<div class="t" style="left:1007px;top:230px;font-size:12px;color:#f1f1f1;">ForeColor</div>
<div class="a" style="left:1157px;top:230px;width:20px;height:16px;background:#000;"></div>
<div class="t" style="left:1185px;top:230px;font-size:12px;color:#f1f1f1;">ControlText</div>
<div class="a" style="left:1003px;top:247px;width:152px;height:18px;background:#1f1f1f;"></div>
<div class="a" style="left:1156px;top:247px;width:160px;height:18px;background:#1f1f1f;"></div>
<div class="t" style="left:1007px;top:249px;font-size:12px;color:#f1f1f1;">FormBorderStyle</div>
<div class="t" style="left:1159px;top:249px;font-size:12px;color:#f1f1f1;">Sizable</div>
<div class="a" style="left:1003px;top:266px;width:152px;height:18px;background:#1f1f1f;"></div>
<div class="a" style="left:1156px;top:266px;width:160px;height:18px;background:#1f1f1f;"></div>
<div class="t" style="left:1007px;top:268px;font-size:12px;color:#f1f1f1;">RightToLeft</div>
<div class="t" style="left:1159px;top:268px;font-size:12px;color:#f1f1f1;">No</div>
<div class="a" style="left:1003px;top:285px;width:152px;height:18px;background:#1f1f1f;"></div>
<div class="a" style="left:1156px;top:285px;width:160px;height:18px;background:#1f1f1f;"></div>
<div class="t" style="left:1007px;top:287px;font-size:12px;color:#f1f1f1;">RightToLeftLayout</div>
<div class="t" style="left:1159px;top:287px;font-size:12px;color:#f1f1f1;">False</div>
<div class="a" style="left:1003px;top:304px;width:152px;height:18px;background:#2e2e2e;"></div>
<div class="a" style="left:1156px;top:304px;width:160px;height:18px;background:#2a2a2a;"></div>
<div class="t" style="left:1007px;top:306px;font-size:12px;color:#f1f1f1;">Text</div>
<div class="t" style="left:1159px;top:306px;font-size:12px;color:#f1f1f1;font-weight:bold;">Form1</div>
<div class="a" style="left:1003px;top:323px;width:152px;height:18px;background:#1f1f1f;"></div>
<div class="a" style="left:1156px;top:323px;width:160px;height:18px;background:#1f1f1f;"></div>
<div class="t" style="left:1007px;top:325px;font-size:12px;color:#f1f1f1;">UseWaitCursor</div>
<div class="t" style="left:1159px;top:325px;font-size:12px;color:#f1f1f1;">False</div>
<svg class="a" style="left:991px;top:346px;" width="10" height="10" viewBox="0 0 10 10"><rect x="0.5" y="0.5" width="9" height="9" fill="none" stroke="#e8e8e8"/><path d="M2.5 5H7.5" stroke="#e8e8e8" stroke-width="1.2"/></svg>
<div class="t" style="left:1007px;top:344px;font-size:12px;color:#f1f1f1;font-weight:bold;">Comportamiento</div>
<div class="a" style="left:1003px;top:361px;width:152px;height:18px;background:#1f1f1f;"></div>
<div class="a" style="left:1156px;top:361px;width:160px;height:18px;background:#1f1f1f;"></div>
<div class="t" style="left:1007px;top:363px;font-size:12px;color:#f1f1f1;">AllowDrop</div>
<div class="t" style="left:1159px;top:363px;font-size:12px;color:#f1f1f1;">False</div>
<div class="a" style="left:1003px;top:380px;width:152px;height:18px;background:#1f1f1f;"></div>
<div class="a" style="left:1156px;top:380px;width:160px;height:18px;background:#1f1f1f;"></div>
<div class="t" style="left:1007px;top:382px;font-size:12px;color:#f1f1f1;">AutoValidate</div>
<div class="t" style="left:1159px;top:382px;font-size:12px;color:#f1f1f1;transform-origin:0 0;transform:scaleX(0.9582);">EnablePreventFocusChange</div>
<div class="a" style="left:1003px;top:399px;width:152px;height:18px;background:#1f1f1f;"></div>
<div class="a" style="left:1156px;top:399px;width:160px;height:18px;background:#1f1f1f;"></div>
<div class="t" style="left:1007px;top:401px;font-size:12px;color:#f1f1f1;">ContextMenuStrip</div>
<div class="t" style="left:1159px;top:401px;font-size:12px;color:#f1f1f1;">(none)</div>
<div class="a" style="left:1003px;top:418px;width:152px;height:18px;background:#1f1f1f;"></div>
<div class="a" style="left:1156px;top:418px;width:160px;height:18px;background:#1f1f1f;"></div>
<div class="t" style="left:1007px;top:420px;font-size:12px;color:#f1f1f1;">DoubleBuffered</div>
<div class="t" style="left:1159px;top:420px;font-size:12px;color:#f1f1f1;">False</div>
<div class="a" style="left:1003px;top:437px;width:152px;height:18px;background:#1f1f1f;"></div>
<div class="a" style="left:1156px;top:437px;width:160px;height:18px;background:#1f1f1f;"></div>
<div class="t" style="left:1007px;top:439px;font-size:12px;color:#f1f1f1;">Enabled</div>
<div class="t" style="left:1159px;top:439px;font-size:12px;color:#f1f1f1;">True</div>
<div class="a" style="left:1003px;top:456px;width:152px;height:18px;background:#1f1f1f;"></div>
<div class="a" style="left:1156px;top:456px;width:160px;height:18px;background:#1f1f1f;"></div>
<div class="t" style="left:1007px;top:458px;font-size:12px;color:#f1f1f1;">ImeMode</div>
<div class="t" style="left:1159px;top:458px;font-size:12px;color:#f1f1f1;">NoControl</div>
<svg class="a" style="left:991px;top:479px;" width="10" height="10" viewBox="0 0 10 10"><rect x="0.5" y="0.5" width="9" height="9" fill="none" stroke="#e8e8e8"/><path d="M2.5 5H7.5" stroke="#e8e8e8" stroke-width="1.2"/></svg>
<div class="t" style="left:1007px;top:477px;font-size:12px;color:#f1f1f1;font-weight:bold;">Datos</div>
<div class="a" style="left:1003px;top:494px;width:152px;height:18px;background:#1f1f1f;"></div>
<div class="a" style="left:1156px;top:494px;width:160px;height:18px;background:#1f1f1f;"></div>
<svg class="a" style="left:991px;top:498px;" width="10" height="10" viewBox="0 0 10 10"><rect x="0.5" y="0.5" width="9" height="9" fill="none" stroke="#e8e8e8"/><path d="M2.5 5H7.5" stroke="#e8e8e8" stroke-width="1.2"/><path d="M5 2.5V7.5" stroke="#e8e8e8" stroke-width="1.2"/></svg>
<div class="t" style="left:1007px;top:496px;font-size:12px;color:#f1f1f1;">(DataBindings)</div>
<div class="t" style="left:1159px;top:496px;font-size:12px;color:#f1f1f1;font-weight:bold;">(ControlBindings)</div>
<div class="a" style="left:1003px;top:513px;width:152px;height:18px;background:#1f1f1f;"></div>
<div class="a" style="left:1156px;top:513px;width:160px;height:18px;background:#1f1f1f;"></div>
<div class="t" style="left:1007px;top:515px;font-size:12px;color:#f1f1f1;">Tag</div>
<svg class="a" style="left:991px;top:536px;" width="10" height="10" viewBox="0 0 10 10"><rect x="0.5" y="0.5" width="9" height="9" fill="none" stroke="#e8e8e8"/><path d="M2.5 5H7.5" stroke="#e8e8e8" stroke-width="1.2"/></svg>
<div class="t" style="left:1007px;top:534px;font-size:12px;color:#f1f1f1;font-weight:bold;">Design</div>
<div class="a" style="left:1003px;top:551px;width:152px;height:18px;background:#1f1f1f;"></div>
<div class="a" style="left:1156px;top:551px;width:160px;height:18px;background:#1f1f1f;"></div>
<div class="t" style="left:1007px;top:553px;font-size:12px;color:#f1f1f1;">(Name)</div>
<div class="t" style="left:1159px;top:553px;font-size:12px;color:#f1f1f1;font-weight:bold;">Form1</div>
<div class="a" style="left:1003px;top:570px;width:152px;height:18px;background:#1f1f1f;"></div>
<div class="a" style="left:1156px;top:570px;width:160px;height:18px;background:#1f1f1f;"></div>
<div class="t" style="left:1007px;top:572px;font-size:12px;color:#f1f1f1;">Language</div>
<div class="t" style="left:1159px;top:572px;font-size:12px;color:#f1f1f1;">(Default)</div>
<div class="a" style="left:1003px;top:589px;width:152px;height:18px;background:#1f1f1f;"></div>
<div class="a" style="left:1156px;top:589px;width:160px;height:18px;background:#1f1f1f;"></div>
<div class="t" style="left:1007px;top:591px;font-size:12px;color:#f1f1f1;">Localizable</div>
<div class="t" style="left:1159px;top:591px;font-size:12px;color:#f1f1f1;">False</div>
<div class="a" style="left:1003px;top:608px;width:152px;height:18px;background:#1f1f1f;"></div>
<div class="a" style="left:1156px;top:608px;width:160px;height:18px;background:#1f1f1f;"></div>
<div class="t" style="left:1007px;top:610px;font-size:12px;color:#f1f1f1;">Locked</div>
<div class="t" style="left:1159px;top:610px;font-size:12px;color:#f1f1f1;">False</div>
<svg class="a" style="left:991px;top:631px;" width="10" height="10" viewBox="0 0 10 10"><rect x="0.5" y="0.5" width="9" height="9" fill="none" stroke="#e8e8e8"/><path d="M2.5 5H7.5" stroke="#e8e8e8" stroke-width="1.2"/></svg>
<div class="t" style="left:1007px;top:629px;font-size:12px;color:#f1f1f1;font-weight:bold;">Diseño</div>
<div class="a" style="left:1003px;top:646px;width:152px;height:18px;background:#1f1f1f;"></div>
<div class="a" style="left:1156px;top:646px;width:160px;height:18px;background:#1f1f1f;"></div>
<div class="t" style="left:1007px;top:648px;font-size:12px;color:#f1f1f1;">AutoScaleMode</div>
<div class="t" style="left:1159px;top:648px;font-size:12px;color:#f1f1f1;font-weight:bold;">Font</div>
<div class="a" style="left:1003px;top:665px;width:152px;height:18px;background:#1f1f1f;"></div>
<div class="a" style="left:1156px;top:665px;width:160px;height:18px;background:#1f1f1f;"></div>
<div class="t" style="left:1007px;top:667px;font-size:12px;color:#f1f1f1;">AutoScroll</div>
<div class="t" style="left:1159px;top:667px;font-size:12px;color:#f1f1f1;">False</div>
<div class="a" style="left:1316px;top:168px;width:18px;height:512px;background:#2b2b2b;"></div>
<svg class="a" style="left:1320px;top:175px;" width="10" height="6" viewBox="0 0 10 6"><path d="M0 5.5L5 0.5L10 5.5Z" fill="#999"/></svg>
<div class="a" style="left:1322px;top:237px;width:7px;height:188px;background:#4d4d4d;"></div>
<svg class="a" style="left:1320px;top:668px;" width="10" height="6" viewBox="0 0 10 6"><path d="M0 0.5L5 5.5L10 0.5Z" fill="#999"/></svg>
<div class="a" style="left:988px;top:680px;width:346px;height:18px;background:#1f1f1f;border-top:1px solid #2b2b2b;overflow:hidden;"></div>
<div class="a" style="left:988px;top:681px;width:346px;height:14px;overflow:hidden"><div class="t" style="left:6px;top:7px;font-size:12px;font-weight:bold;color:#f1f1f1">Text</div></div>
<div class="a" style="left:1335px;top:97px;width:31px;height:604px;background:#1f1f1f;"></div>
<div class="a" style="left:1360px;top:97px;width:5px;height:131px;background:#2d2d2d;"></div>
<div class="a" style="left:1360px;top:236px;width:5px;height:90px;background:#2d2d2d;"></div>
<div class="t" style="left:1355px;top:97px;font-size:12px;color:#c8c8c8;transform-origin:0 0;transform:rotate(90deg);letter-spacing:-0.16px">Explorador de soluciones</div>
<div class="t" style="left:1355px;top:241px;font-size:12px;color:#c8c8c8;transform-origin:0 0;transform:rotate(90deg);letter-spacing:-0.33px">Cambios de GIT</div>
<div class="a" style="left:0px;top:705px;width:1366px;height:23px;background:#86192c;"></div>
<svg class="a" style="left:4px;top:709px;" width="17" height="17" viewBox="0 0 17 17"><path d="M0.6 0.6H15.4V11.4H10L8 13.5L6 11.4H0.6Z" fill="#9c3a4a" stroke="#fff" stroke-width="1.2"/></svg>
<div class="t" style="left:28px;top:710px;font-size:12px;color:#ffffff;letter-spacing:-0.086px;">Listo</div>
<svg class="a" style="left:912px;top:710px;" width="11" height="13" viewBox="0 0 11 13"><path d="M5.5 13V1M1 5.5L5.5 1L10 5.5" fill="none" stroke="#fff" stroke-width="1.2"/></svg>
<div class="t" style="left:933px;top:710px;font-size:12px;color:#ffffff;letter-spacing:0.037px;">Agregar al control de código fuente</div>
<svg class="a" style="left:1126px;top:715px;" width="8" height="5" viewBox="0 0 8 5"><path d="M0 4.5L4 0.5L8 4.5Z" fill="#fff"/></svg>
<svg class="a" style="left:1157px;top:710px;" width="15" height="14" viewBox="0 0 15 14"><rect x="0.6" y="0.6" width="13.8" height="3" fill="none" stroke="#fff" stroke-width="1.2"/><rect x="1.6" y="3.6" width="11.8" height="9.8" fill="none" stroke="#fff" stroke-width="1.2"/><path d="M5.5 5V10.5L7.5 9L9.5 10.5V5" fill="none" stroke="#fff" stroke-width="1"/></svg>
<div class="t" style="left:1179px;top:710px;font-size:12px;color:#ffffff;letter-spacing:-0.094px;">Seleccionar repositorio</div>
<svg class="a" style="left:1305px;top:715px;" width="8" height="5" viewBox="0 0 8 5"><path d="M0 4.5L4 0.5L8 4.5Z" fill="#fff"/></svg>
<svg class="a" style="left:1332px;top:707px;" width="24" height="21" viewBox="0 0 24 21"><path d="M2 13C3.5 12 3.5 10.5 3.5 8C3.5 4.5 5.5 2 8 2C10.5 2 12.5 4.5 12.5 8C12.5 10.5 12.5 12 14 13Z" fill="none" stroke="#fff" stroke-width="1.1"/><path d="M6.5 14.5C7 15.5 9 15.5 9.5 14.5" fill="none" stroke="#fff" stroke-width="1"/><circle cx="16.5" cy="13.5" r="6.2" fill="#f49aa6"/><path d="M15.3 10.8L17 9.8V17.5" fill="none" stroke="#2a1018" stroke-width="1.3"/></svg>
<div class="a" style="left:0px;top:728px;width:1366px;height:40px;background:linear-gradient(90deg,#272c31 0px,#262a2e 380px,#24272c 392px,#2a2628 470px,#322f2a 560px,#383529 700px,#3b382b 800px,#34322a 900px,#2a2a26 990px,#222220 1060px,#1e1d26 1130px,#1c1b2a 1366px);"></div>
<div class="a" style="left:48px;top:728px;width:344px;height:40px;background:#f0f0f0;border-top:1px solid #c8c8c8;"></div>
<svg class="a" style="left:16px;top:740px;" width="17" height="17" viewBox="0 0 17 17"><g fill="#fff"><path d="M0 2.4L6.7 1.5V7.8H0Z"/><path d="M7.6 1.4L16.5 0.2V7.8H7.6Z"/><path d="M0 8.8H6.7V15.2L0 14.3Z"/><path d="M7.6 8.8H16.5V16.6L7.6 15.4Z"/></g></svg>
<svg class="a" style="left:59px;top:739px;" width="19" height="19" viewBox="0 0 19 19"><circle cx="11.5" cy="7" r="5.6" fill="none" stroke="#111" stroke-width="1.3"/><path d="M7.5 11L1.5 17" stroke="#111" stroke-width="1.4"/></svg>
<div class="t" style="left:88px;top:741px;font-size:14.5px;color:#1a1a1a;letter-spacing:-0.008px;">Escribe aquí para buscar</div>
<svg class="a" style="left:316px;top:729px;" width="76" height="38" viewBox="0 0 76 38"><defs><radialGradient id="gl" cx=".4" cy=".35" r=".7"><stop offset="0" stop-color="#9fd3f3"/><stop offset="1" stop-color="#2d6fae"/></radialGradient><linearGradient id="sn" x1="0" y1="0" x2="1" y2="0"><stop offset="0" stop-color="#f2b52a"/><stop offset="1" stop-color="#ffd84a"/></linearGradient></defs><circle cx="15" cy="19" r="13.5" fill="url(#gl)"/><path d="M14 6C17 5.5 22 6 25 9C27 12 27.5 15 26 17C24 16 22 17 21 19C22 22 20 25 18 27C17 29 15.5 31 14 32C13.5 28 13 25 11.5 23C10 21 8 20 9 17C10 15 12 15 12 13C10 12 9 10 11 8Z" fill="#2f8a3a"/><path d="M15 6C19 6 24 8 26 12C25 14 23 14 22 13C21 11 19 11 18 9Z" fill="#6fbf4a"/><path d="M15 0V38M1.5 21C9 25.5 21 25.5 28.5 19.5" fill="none" stroke="#f07a62" stroke-width="1.4"/><g fill="none" stroke="#8aa9c8" stroke-width="1.8"><path d="M32 8H43M35 5L32 8L35 11M32 19H43M35 16L32 19L35 22M32 30H43M35 27L32 30L35 33"/></g><circle cx="79" cy="19" r="31" fill="#f08a20"/><circle cx="79" cy="19" r="29.5" fill="url(#sn)"/><g fill="#f08a20"><circle cx="48.5" cy="10" r="2"/><circle cx="47.8" cy="16" r="2"/><circle cx="47.8" cy="22" r="2"/><circle cx="48.5" cy="28" r="2"/><circle cx="50" cy="4" r="2"/><circle cx="50" cy="34" r="2"/></g></svg>
<svg class="a" style="left:406px;top:739px;" width="19" height="18" viewBox="0 0 19 18"><g fill="none" stroke="#fff" stroke-width="1.3"><path d="M1.5 0V2.5H11.5V0M1.5 18V15.5H11.5V18"/><rect x="1.5" y="5.5" width="10" height="7"/><path d="M17.5 0V4M17.5 9V18"/></g><rect x="15.5" y="5" width="4" height="3.5" fill="#fff"/></svg>
<svg class="a" style="left:452px;top:737px;" width="25" height="22" viewBox="0 0 25 22"><path d="M0 7L12.5 0L25 7V22H0Z" fill="#0f6cbd"/><path d="M3 6H22V12L12.5 17L3 12Z" fill="#fff"/><path d="M0 9L12.5 16L25 9V22H0Z" fill="#28a8ea"/><path d="M0 22L12.5 14L25 22Z" fill="#1490df"/></svg>
<svg class="a" style="left:494px;top:735px;" width="26" height="26" viewBox="0 0 26 26"><defs><linearGradient id="eg" x1="0" y1="0" x2="1" y2="1"><stop offset="0" stop-color="#35c1f1"/><stop offset=".6" stop-color="#1b8fde"/><stop offset="1" stop-color="#0c59a4"/></linearGradient></defs><circle cx="13" cy="13" r="12" fill="url(#eg)"/><path d="M25 13C25 6 19.5 1 13 1C20 2 24 8 20 12C17 14 11 14 11 11C11 9 13 8 15 9C13 6 6 7 6 13C6 19 12 23 17 23C21 22 24.5 18 25 13Z" fill="#52d88a"/><path d="M6 13C6 19 12 23 17 23C11 25 3 20 4 12Z" fill="#0b4a8c"/></svg>
<div class="a" style="left:490px;top:766px;width:34px;height:2px;background:#76b9ed;"></div>
<svg class="a" style="left:538px;top:738px;" width="23" height="19" viewBox="0 0 23 19"><path d="M0 2H8L10 4H23V19H0Z" fill="#f5c342"/><path d="M0 6H23V19H0Z" fill="#ffd866"/><path d="M7 12H16V19H13V15H10V19H7Z" fill="#2b88d8"/></svg>
<svg class="a" style="left:580px;top:736px;" width="25" height="25" viewBox="0 0 25 25"><circle cx="12.5" cy="12.5" r="12" fill="#34a853"/><path d="M12.5 0.5A12 12 0 0 1 22.9 6.5H12.5A6 6 0 0 0 7.3 9.5L2.1 6.5A12 12 0 0 1 12.5 0.5Z" fill="#ea4335"/><path d="M22.9 6.5A12 12 0 0 1 12.5 24.5L17.7 15.5A6 6 0 0 0 17.7 9.5Z" fill="#fbbc04"/><circle cx="12.5" cy="12.5" r="5.5" fill="#fff"/><circle cx="12.5" cy="12.5" r="4.3" fill="#4285f4"/></svg>
<svg class="a" style="left:624px;top:736px;" width="24" height="24" viewBox="0 0 24 24"><circle cx="12" cy="12" r="12" fill="#000"/><g fill="none" stroke-width="2.2"><path d="M10 10.5A3.7 3.7 0 1 0 12.5 14V4.5C13 7 15 8.5 17 8.5" stroke="#25f4ee" transform="translate(-0.8,-0.6)"/><path d="M10 10.5A3.7 3.7 0 1 0 12.5 14V4.5C13 7 15 8.5 17 8.5" stroke="#fe2c55" transform="translate(0.8,0.6)"/><path d="M10 10.5A3.7 3.7 0 1 0 12.5 14V4.5C13 7 15 8.5 17 8.5" stroke="#fff"/></g></svg>
<svg class="a" style="left:667px;top:737px;" width="23" height="22" viewBox="0 0 23 22"><rect x="0" y="0" width="23" height="22" rx="6" fill="#4a8cf7"/><rect x="4" y="7" width="10.5" height="8" rx="1.5" fill="#fff"/><path d="M15 10L19 7.5V14.5L15 12Z" fill="#fff"/></svg>
<svg class="a" style="left:710px;top:736px;" width="23" height="24" viewBox="0 0 23 24"><path d="M10 4H22V20H10Z" fill="#fff" stroke="#2b579a" stroke-width="1"/><g fill="#2b579a"><rect x="12" y="6.5" width="8" height="1.2"/><rect x="12" y="9.5" width="8" height="1.2"/><rect x="12" y="12.5" width="8" height="1.2"/><rect x="12" y="15.5" width="8" height="1.2"/></g><path d="M0 3L13 0.5V23.5L0 21Z" fill="#2b579a"/><path d="M2.5 8L4 16L5.8 10L7.5 16L9.5 8" fill="none" stroke="#fff" stroke-width="1.4"/></svg>
<svg class="a" style="left:754px;top:736px;" width="23" height="24" viewBox="0 0 23 24"><path d="M10 4H22V20H10Z" fill="#fff" stroke="#d04423" stroke-width="1"/><circle cx="17" cy="9" r="3" fill="#d04423"/><rect x="13" y="14" width="7" height="1.2" fill="#d04423"/><rect x="13" y="16.5" width="7" height="1.2" fill="#d04423"/><path d="M0 3L13 0.5V23.5L0 21Z" fill="#d04423"/><path d="M4 17V7H7C9 7 10 8 10 10C10 12 9 13 7 13H4" fill="none" stroke="#fff" stroke-width="1.7"/></svg>
<svg class="a" style="left:795px;top:736px;" width="24" height="24" viewBox="0 0 24 24"><circle cx="12" cy="12" r="12" fill="#1ed760"/><g fill="none" stroke="#000" stroke-linecap="round"><path d="M5 8.5C9 7 15 7.2 19 9.3" stroke-width="2.3"/><path d="M5.8 12.3C9.5 11 14.5 11.3 17.8 13" stroke-width="1.9"/><path d="M6.5 15.7C9.5 14.8 13.5 15 16.3 16.3" stroke-width="1.6"/></g></svg>
<svg class="a" style="left:841px;top:738px;" width="19" height="19" viewBox="0 0 19 19"><path d="M8 0H11L11.5 2.6L13.6 3.5L15.8 2L18 4.2L16.5 6.4L17.4 8.5L20 9V10L17.4 10.5L16.5 12.6L18 14.8L15.8 17L13.6 15.5L11.5 16.4L11 19H8L7.5 16.4L5.4 15.5L3.2 17L1 14.8L2.5 12.6L1.6 10.5L-1 10V9L1.6 8.5L2.5 6.4L1 4.2L3.2 2L5.4 3.5L7.5 2.6Z" fill="#fff" transform="translate(0,0)"/><circle cx="9.5" cy="9.5" r="4" fill="#38342e"/></svg>
<svg class="a" style="left:881px;top:737px;" width="22" height="21" viewBox="0 0 22 21"><rect x="0.75" y="0.75" width="20.5" height="19.5" fill="#1f0740" stroke="#9a8cf8" stroke-width="1.5"/><text x="3" y="15" font-family="Liberation Sans" font-size="11" fill="#b7a5fb">Ae</text></svg>
<svg class="a" style="left:923px;top:737px;" width="23" height="22" viewBox="0 0 23 22"><rect x="0" y="0" width="23" height="22" rx="5" fill="#0f3440"/><path d="M0 16H23V17C23 20 20 22 18 22H5C2 22 0 20 0 17Z" fill="#eaeaea"/><rect x="9" y="2.5" width="3.5" height="3.5" fill="#fff" transform="rotate(45 10.7 4.2)"/><path d="M8 13L15 8.5V11L8 15.5Z" fill="#5fe0c0"/></svg>
<svg class="a" style="left:964px;top:736px;" width="24" height="24" viewBox="0 0 24 24"><path d="M17 0.5L23.5 3.5V20.5L17 23.5L6.5 13.5L2.5 16.5L0.5 15.5V8.5L2.5 7.5L6.5 10.5Z" fill="#9b6ed6"/><path d="M17 0.5L23.5 3.5V20.5L17 23.5Z" fill="#b58ce8"/><path d="M17 6.5L10.5 12L17 17.5Z" fill="#38342e"/><path d="M2.5 9.5V14.5L5 12Z" fill="#5c3a96"/></svg>
<div class="a" style="left:960px;top:766px;width:34px;height:2px;background:#76b9ed;"></div>
<div class="a" style="left:998px;top:728px;width:43px;height:40px;background:#5a5850;"></div>
<svg class="a" style="left:1007px;top:737px;" width="23" height="21" viewBox="0 0 23 21"><g fill="#3d3d3d" stroke="#e8e8e8" stroke-width="1.5"><rect x="9" y="1" width="12" height="12"/><rect x="1.5" y="8" width="7" height="9"/><rect x="9" y="13" width="9" height="6"/></g></svg>
<div class="a" style="left:998px;top:766px;width:43px;height:2px;background:#76b9ed;"></div>
<svg class="a" style="left:1064px;top:736px;" width="28" height="24" viewBox="0 0 28 24"><defs><linearGradient id="wsun" x1="0" y1="0" x2="1" y2="1"><stop offset="0" stop-color="#ffc21a"/><stop offset="1" stop-color="#f57a0a"/></linearGradient><linearGradient id="wcl" x1="0" y1="0" x2="0" y2="1"><stop offset="0" stop-color="#a8c8f5"/><stop offset="1" stop-color="#e6f0fb"/></linearGradient></defs><circle cx="13.5" cy="13" r="10" fill="url(#wsun)"/><path d="M2 9.5C1 9.5 0.5 8 1.5 7C2 5 4 5 4.5 5.5C5 3 8.5 2.5 9.5 4.5C11.5 4.5 12.5 6 12 7.5C13 8 13 9.5 12 9.5Z" fill="url(#wcl)"/><path d="M12 22C11 22 10.5 20.5 11.5 19.5C12 17.5 14 17.5 14.5 18C15 15.5 18.5 15 19.5 17C21.5 17 22.5 18.5 22 20C23 20.5 23 22 22 22Z" fill="url(#wcl)"/></svg>
<div class="t" style="left:1099px;top:741px;font-size:14.5px;color:#ffffff;transform-origin:0 0;transform:scaleX(0.8644);">19°C</div>
<svg class="a" style="left:1153px;top:744px;" width="13" height="8" viewBox="0 0 13 8"><path d="M0.8 7L6.5 1.2L12.2 7" fill="none" stroke="#fff" stroke-width="1.3"/></svg>
<svg class="a" style="left:1175px;top:739px;" width="17" height="17" viewBox="0 0 17 17"><path d="M0.7 6H4L8 2.5V14.5L4 11H0.7Z" fill="none" stroke="#fff" stroke-width="1.2"/><path d="M10.5 5.5C12 7 12 10 10.5 11.5M12.8 3.5C15.3 6 15.3 11 12.8 13.5" fill="none" stroke="#ccc" stroke-width="1.1"/></svg>
<svg class="a" style="left:1199px;top:742px;" width="17" height="11" viewBox="0 0 17 11"><rect x="0.7" y="0.7" width="13.6" height="9.6" fill="none" stroke="#fff" stroke-width="1.3"/><rect x="3" y="3" width="7" height="5" fill="#fff"/><rect x="15" y="3.5" width="2" height="4" fill="#fff"/></svg>
<svg class="a" style="left:1225px;top:740px;" width="16" height="15" viewBox="0 0 16 15"><g fill="none" stroke="#fff" stroke-width="1.2"><path d="M0.8 14C0.8 7 7 0.8 14 0.8"/><path d="M4 14C4 9 9 4 14 4"/><path d="M7.2 14C7.2 10.5 10.5 7.2 14 7.2"/></g><circle cx="12" cy="12" r="2" fill="#fff"/></svg>
<div class="t" style="left:1250px;top:733px;font-size:12px;color:#ffffff;transform-origin:0 0;transform:scaleX(0.9333);">09:02 a. m.</div>
<div class="t" style="left:1249px;top:750px;font-size:12px;color:#ffffff;letter-spacing:-0.226px;">20/03/2024</div>
<svg class="a" style="left:1324px;top:737px;" width="28" height="28" viewBox="0 0 28 28"><path d="M1.7 1.7H17.3V13.3H9L5 17V13.3H1.7Z" fill="#fff"/><g fill="#1c1c28"><rect x="4" y="4" width="11" height="1.3"/><rect x="4" y="7" width="11" height="1.3"/><rect x="4" y="10" width="8" height="1.3"/></g><circle cx="17.5" cy="18.5" r="8.3" fill="#3a3a3a" stroke="#8a8a8a" stroke-width="1"/><text x="13.6" y="23.3" font-family="Liberation Sans" font-size="13.5" fill="#fff">2</text></svg>
<div class="a" style="left:1361px;top:728px;width:1px;height:40px;background:#555;"></div>
</body></html>
